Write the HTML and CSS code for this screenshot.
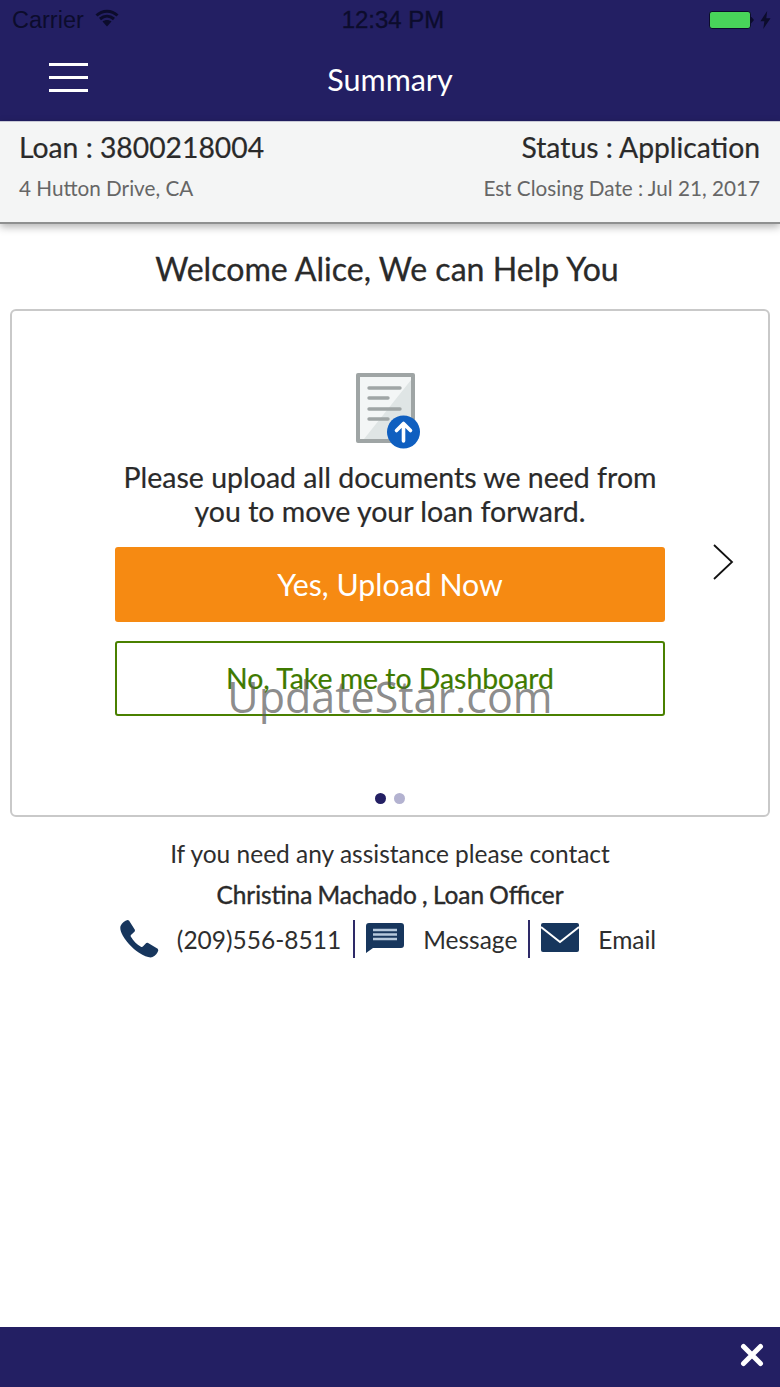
FILE: index.html
```html
<!DOCTYPE html>
<html lang="en">
<head>
<meta charset="utf-8">
<title>Summary</title>
<link rel="stylesheet" href="styles.css">
</head>
<body>
<div class="app">
  <header class="header">
    <div class="status">
      <div class="status-left"><span>Carrier</span>
        <svg class="wifi" width="24" height="18" viewBox="0 0 24 18"><path d="M1.500 6.500C7.500.8 16.500.8 22.500 6.500M5 10c4.200-3.700 9.800-3.700 14 0" fill="none" stroke="#0c0c2c" stroke-width="3"/><path d="M7.500 12.500c2.700-2 6.300-2 9 0L12 17.500z" fill="#0c0c2c"/></svg>
      </div>
      <div class="status-time">12:34 PM</div>
      <div class="status-right">
        <span class="battery"></span><span class="battery-tip"></span>
        <svg class="bolt" width="11" height="18" viewBox="0 0 9 16"><path d="M6 0 0 9h3.500L2.500 16 9 6.500H5.200z" fill="#0c0c2c"/></svg>
      </div>
    </div>
    <div class="nav">
      <div class="burger"><span></span><span></span><span></span></div>
      <h1 class="nav-title">Summary</h1>
    </div>
  </header>
  <section class="info">
    <div class="info-row main-row"><span>Loan : 3800218004</span><span>Status : Application</span></div>
    <div class="info-row sub-row"><span>4 Hutton Drive, CA</span><span>Est Closing Date : Jul 21, 2017</span></div>
  </section>
  <main class="content">
    <h2 class="welcome">Welcome Alice, We can Help You</h2>
    <section class="card">
      <svg class="doc-icon" width="66" height="77" viewBox="0 0 66 77">
        <rect x="1" y="1" width="59" height="70" rx="2" fill="#9fa5a5"/>
        <rect x="5" y="5" width="51" height="62" fill="#f3f6f6"/>
        <path d="M56 8V67H9z" fill="#dfe5e5"/>
        <path d="M14 16H45M14 26H33M14 37H45M14 47H33" stroke="#9fa5a5" stroke-width="3.400" stroke-linecap="round"/>
        <circle cx="48.500" cy="60" r="16.500" fill="#0f5fc0"/>
        <path d="M48.500 69V52M41.500 58.500l7-7 7 7" fill="none" stroke="#fff" stroke-width="3.600" stroke-linecap="round" stroke-linejoin="round"/>
      </svg>
      <p class="card-text">Please upload all documents we need from<br>you to move your loan forward.</p>
      <button class="btn btn-primary">Yes, Upload Now</button>
      <button class="btn btn-outline">No, Take me to Dashboard</button>
      <svg class="chevron" width="22" height="38" viewBox="0 0 22 38"><path d="M2 2l18 17L2 36" fill="none" stroke="#111" stroke-width="1.800"/></svg>
      <div class="dots"><span class="dot dot-on"></span><span class="dot"></span></div>
    </section>
    <section class="contact">
      <p class="contact-line">If you need any assistance please contact</p>
      <p class="contact-name">Christina Machado , Loan Officer</p>
      <div class="actions">
        <div class="action action-phone">
          <svg width="40" height="40" viewBox="0 0 40 40"><path d="M1.500 7C3 3.500 6 1.500 8.500 1l1.500.500 6 9.500-.3 1.500-3.500 3.200c-.7.700-.7 1.300-.3 2.100 2.600 4.500 5.700 7.500 10 10 .8.400 1.400.4 2-.2l3.300-3.600 1.500-.3 10 6 .6 1.500c-.6 2.700-2.800 5.800-6.300 7.100-3 .6-7.500-.8-13-4.500C13.500 29.500 5.500 21 2.500 14 1.400 11.300 1 9 1.500 7z" fill="#17365d"/></svg>
          <span>(209)556-8511</span>
        </div>
        <div class="action action-message">
          <svg class="small-icon" width="38" height="30" viewBox="0 0 38 30"><path d="M3 0h32c2 0 3 1 3 3v19c0 2-1 3-3 3H7l-7 5V3c0-2 1-3 3-3z" fill="#17365d"/><path d="M7 7h24M7 11.500h24M7 16h24" stroke="#b5c8dc" stroke-width="2.400"/></svg>
          <span>Message</span>
        </div>
        <div class="action action-email">
          <svg class="small-icon" width="38" height="30" viewBox="0 0 38 30"><rect width="38" height="29" rx="2" fill="#17365d"/><path d="M0 4 19 19 38 4" fill="none" stroke="#fff" stroke-width="2"/></svg>
          <span>Email</span>
        </div>
      </div>
    </section>
  </main>
  <footer class="footer">
    <svg width="24" height="24" viewBox="0 0 24 24"><path d="M3.500 3.500l17 17M20.500 3.500l-17 17" stroke="#fff" stroke-width="5" stroke-linecap="round"/></svg>
  </footer>
  <div class="watermark">UpdateStar.com</div>
</div>
</body>
</html>
```

FILE: styles.css
```css
* { box-sizing: border-box; }
html, body { margin: 0; padding: 0; }
body { font-family: Lato, "Open Sans", sans-serif; color: #2b2b2b; background: #fff; }
.app { position: relative; width: 780px; height: 1387px; display: flex; flex-direction: column; overflow: hidden; }

.header { height: 121px; background: #231f63; flex: none; }
.status { height: 40px; display: grid; grid-template-columns: 1fr auto 1fr; align-items: center; padding: 0 9px 0 12px; color: #0c0c2c; font-family: "Liberation Sans", sans-serif; font-size: 23.500px; }
.status-left { display: flex; align-items: center; gap: 11px; }
.wifi { margin-top: -4px; }
.status-time { font-size: 24px; margin-left: 3px; -webkit-text-stroke: .3px #0c0c2c; }
.status-right { display: flex; align-items: center; justify-content: flex-end; }
.battery { width: 42px; height: 18px; border-radius: 3px; border: 1px solid #0c0c2c; background: #48d45a; display: block; }
.battery-tip { width: 3px; height: 7px; background: #0c0c2c; margin: 0 6px 0 0; clip-path: polygon(0 0, 100% 50%, 0 100%); }
.bolt { display: block; }
.nav { position: relative; height: 81px; display: flex; align-items: center; justify-content: center; }
.nav-title { margin: -2px 0 0; font-size: 30.500px; font-weight: 400; color: #fff; line-height: 1; }
.burger { position: absolute; left: 49px; top: 23px; width: 39px; height: 29px; display: flex; flex-direction: column; justify-content: space-between; }
.burger span { display: block; height: 3px; background: #fff; }

.info { height: 103px; flex: none; padding: 7px 20px 0 19px; background: #f4f5f5; border-top: 1px solid #c8c9d6; border-bottom: 2px solid #8f9090; box-shadow: 0 3px 8px rgba(0,0,0,.3); display: flex; flex-direction: column; position: relative; }
.info-row { display: flex; justify-content: space-between; }
.main-row { font-size: 28.300px; line-height: 36px; color: #2a2a2a; -webkit-text-stroke: .2px #2a2a2a; }
.sub-row { margin-top: 10px; font-size: 20.700px; line-height: 26px; color: #666; }

.content { flex: 1; display: flex; flex-direction: column; align-items: center; padding: 0 10px; }
.welcome { margin: 26px 6px 0 0; height: 59px; font-size: 32.100px; line-height: 38px; font-weight: 400; color: #2a2a2a; -webkit-text-stroke: .3px #2a2a2a; }
.card { position: relative; width: 760px; height: 508px; border: 2px solid #c9c9c9; border-radius: 6px; display: flex; flex-direction: column; align-items: center; padding-top: 61px; flex: none; }
.doc-icon { display: block; margin-left: -4px; }
.card-text { margin: 11px 0 0; width: 100%; text-align: center; font-size: 28.500px; line-height: 34px; color: #2a2a2a; -webkit-text-stroke: .2px #2a2a2a; }
.btn { display: block; width: 550px; height: 75px; border-radius: 3px; font: 400 30.300px Lato, sans-serif; padding: 0 0 2px; }
.btn-primary { margin-top: 19px; border: 0; background: #f68a12; color: #fff; }
.btn-outline { margin-top: 19px; background: #fff; border: 2px solid #4a8000; color: #3f7a00; font-size: 28.400px; -webkit-text-stroke: .2px #3f7a00; }
.chevron { position: absolute; left: 700px; top: 232px; }
.dots { position: absolute; left: 0; right: 0; bottom: 11px; display: flex; justify-content: center; gap: 8px; }
.dot { width: 11px; height: 11px; border-radius: 50%; background: #b3b2d0; }
.dot-on { background: #231f63; }

.contact { flex: none; display: flex; flex-direction: column; align-items: center; width: 100%; }
.contact-line { margin: 22px 0 0; font-size: 24.500px; line-height: 30px; color: #2e2e2e; }
.contact-name { margin: 11px 0 0; font-size: 24.400px; line-height: 30px; font-weight: 400; word-spacing: -1px; color: #2a2a2a; -webkit-text-stroke: .4px #2a2a2a; }
.actions { display: flex; margin: 10px 5px 0 0; height: 38px; align-items: center; }
.action { height: 38px; display: flex; align-items: center; font-size: 24.500px; color: #2e2e2e; }
.small-icon { margin-bottom: 2px; }
.action-phone { padding-right: 12px; border-right: 2px solid #2e2a68; gap: 18px; }
.action-message { padding: 0 11px; border-right: 2px solid #2e2a68; gap: 19px; }
.action-email { padding-left: 11px; gap: 19px; }

.footer { height: 60px; flex: none; background: #231f63; display: flex; align-items: center; justify-content: flex-end; padding: 0 16px 4px 0; }

.watermark { position: absolute; left: 0; right: 0; top: 667px; text-align: center; font-family: "Open Sans", sans-serif; font-size: 43px; line-height: 60px; color: rgba(90,90,90,.7); pointer-events: none; }
```
